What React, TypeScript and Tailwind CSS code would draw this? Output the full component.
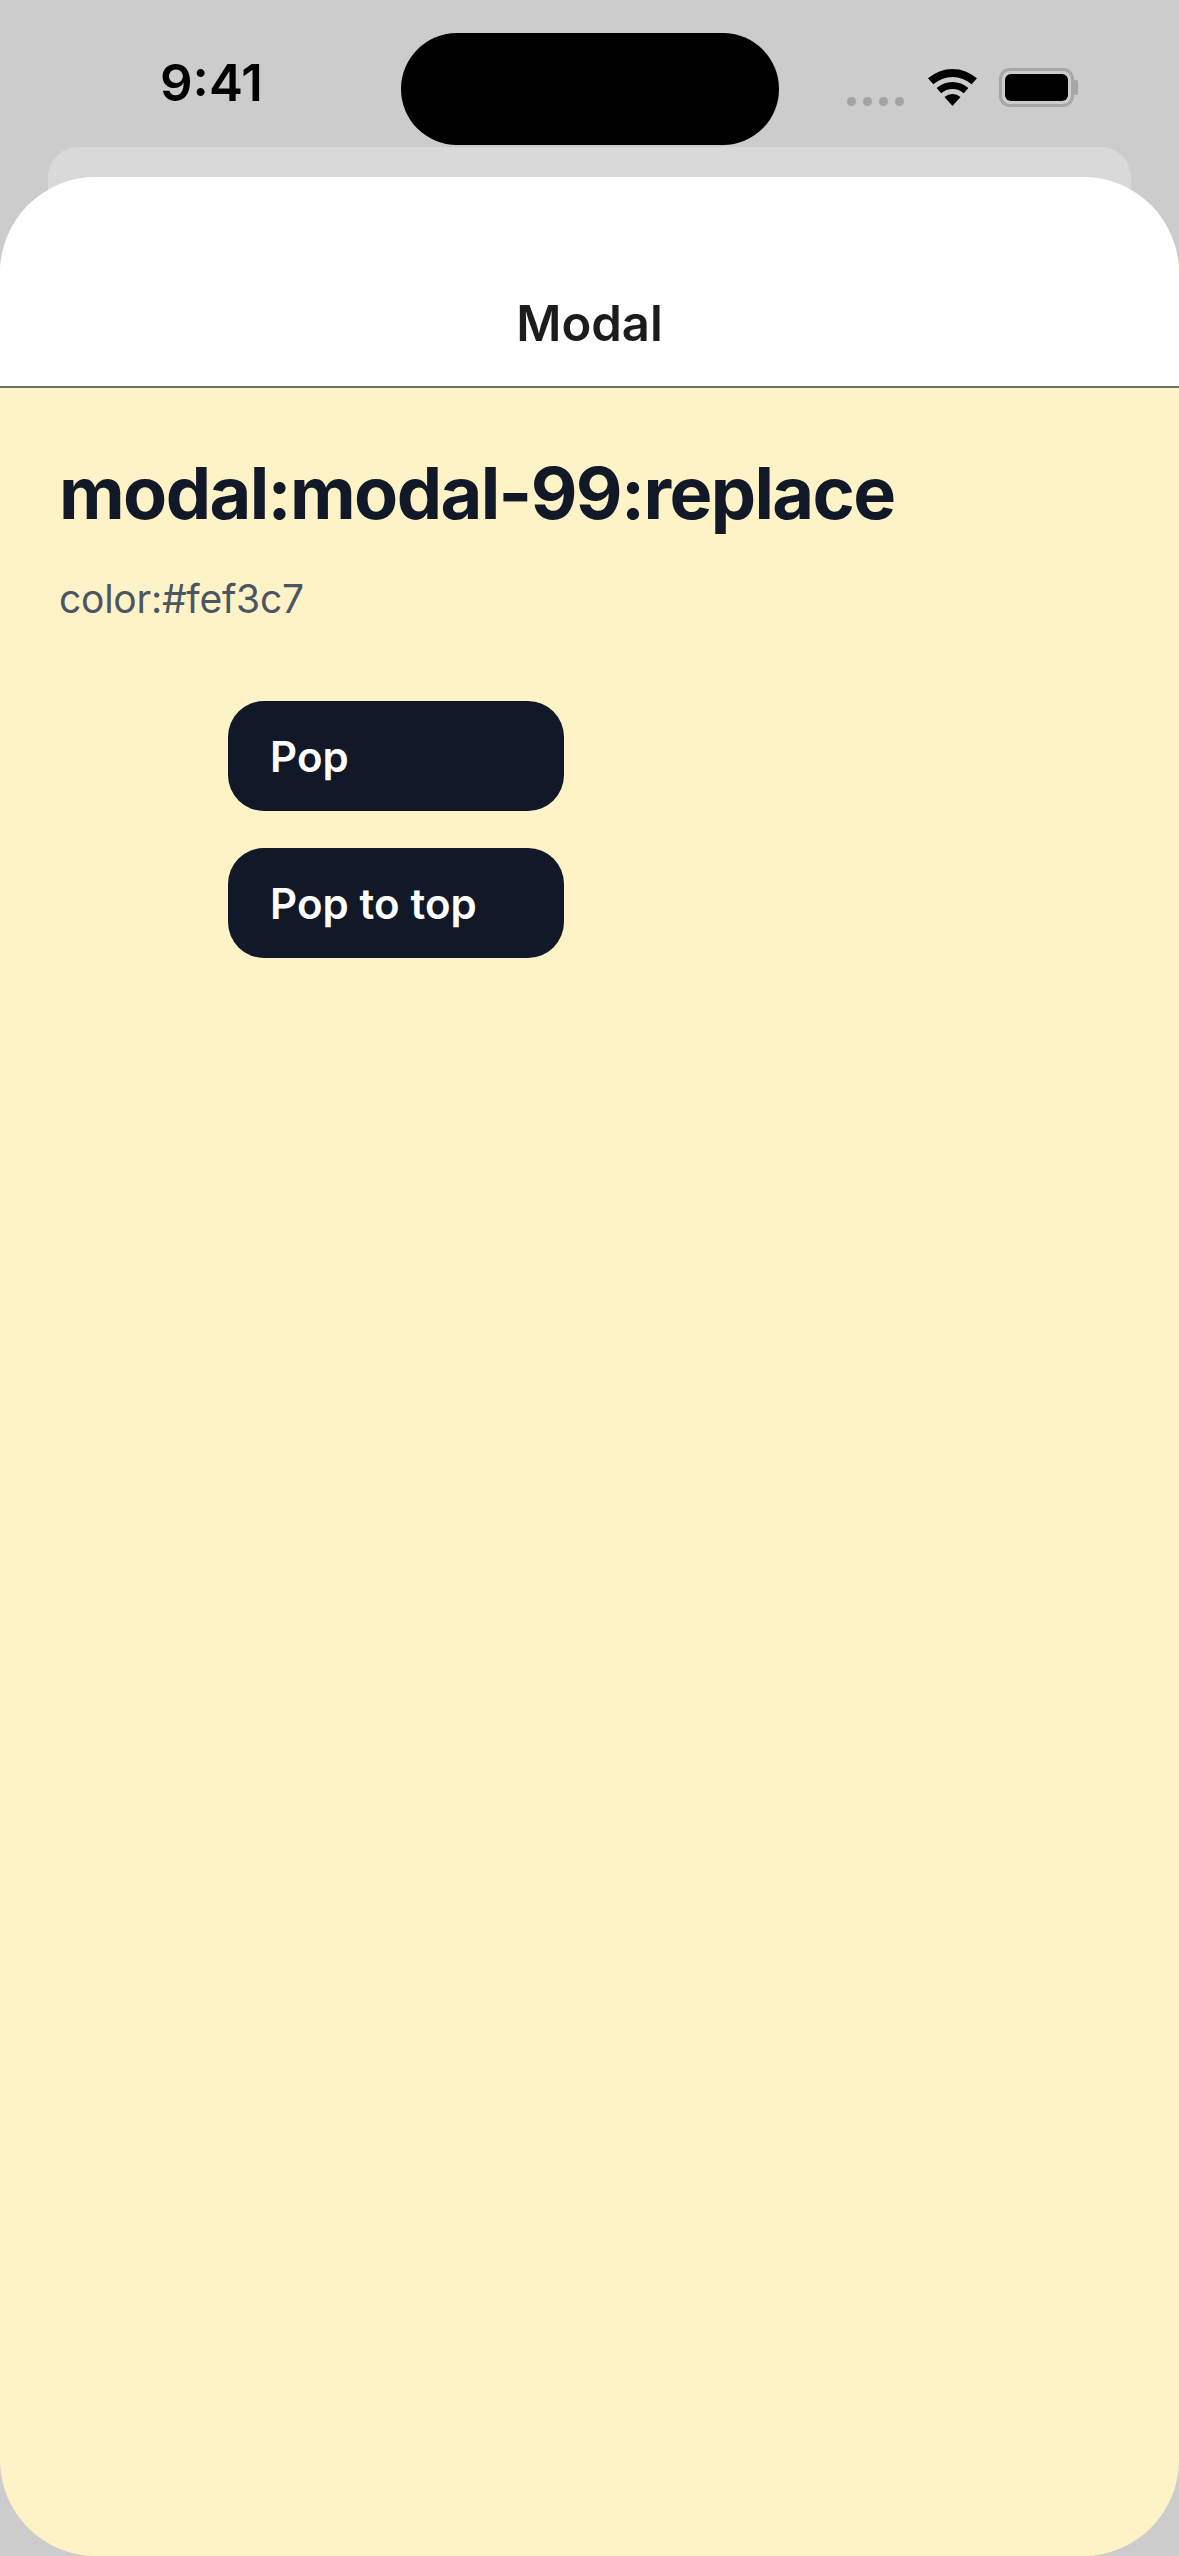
function WifiIcon() {
  return (
    <svg width="49" height="37" viewBox="0 0 49 37" fill="#000">
      <path d="M0 9.3A37 37 0 0 1 49 9.3L43.7 15.3A29 29 0 0 0 5.3 15.3Z" />
      <path d="M8.6 19A24 24 0 0 1 40.4 19L35.8 24.3A17 17 0 0 0 13.2 24.3Z" />
      <path d="M16.5 28A12 12 0 0 1 32.5 28L24.5 37Z" />
    </svg>
  );
}

function SignalDots() {
  return (
    <div className="flex gap-[7px] mt-[28px]">
      {[0, 1, 2, 3].map((i) => (
        <span key={i} className="size-[9px] rounded-full bg-[#a3a3a3]" />
      ))}
    </div>
  );
}

function Battery() {
  return (
    <div className="flex items-center">
      <div className="w-[75px] h-[39px] rounded-[11px] border-[3px] border-[#a6a6a6] p-[3px]">
        <div className="w-full h-full rounded-[6px] bg-black" />
      </div>
      <div className="w-[4px] h-[15px] rounded-r-[2px] bg-[#a6a6a6]" />
    </div>
  );
}

function StatusBar() {
  return (
    <div className="flex items-start h-[147px] pt-[33px]">
      <div className="w-[401px] pl-[160px] pt-[22px] text-[51px] leading-[56px] font-semibold text-black">9:41</div>
      <div className="w-[378px] h-[112px] rounded-[56px] bg-black" />
      <div className="flex items-center ml-[68px] mt-[35px]">
        <SignalDots />
        <div className="ml-[24px]">
          <WifiIcon />
        </div>
        <div className="ml-[22px]">
          <Battery />
        </div>
      </div>
    </div>
  );
}

function ActionButton({ label }: { label: string }) {
  return (
    <button className="w-[336px] h-[110px] rounded-[36px] bg-[#111827] pl-[42px] text-left text-[42px] tracking-[0.1px] font-semibold text-white">
      {label}
    </button>
  );
}

export default function App() {
  return (
    <div className="h-[2556px] overflow-hidden bg-[#cccccc] font-['Inter',sans-serif]">
      <StatusBar />
      <div className="ml-[48px] mr-[48px] h-[100px] rounded-t-[30px] bg-[#d9d9d9]" />
      <main className="relative mt-[-70px] flex h-[2379px] flex-col overflow-hidden rounded-[96px] bg-[#fef3c7]">
        <header className="flex h-[211px] items-end justify-center border-b-2 border-[#6f6f66] bg-white pb-[31px]">
          <h1 className="text-[49px] leading-[62px] font-semibold text-[#1c1c1e]">Modal</h1>
        </header>
        <div className="pl-[59px] pt-[63px]">
          <h2 className="text-[72px] leading-[84px] font-bold tracking-[-1.6px] text-[#111827]">modal:modal-99:replace</h2>
          <p className="mt-[36px] text-[39px] leading-[56px] tracking-[-0.25px] text-[#4b5563]">color:#fef3c7</p>
          <div className="ml-[169px] mt-[74px] flex flex-col gap-[37px] items-start">
            <ActionButton label="Pop" />
            <ActionButton label="Pop to top" />
          </div>
        </div>
      </main>
    </div>
  );
}
